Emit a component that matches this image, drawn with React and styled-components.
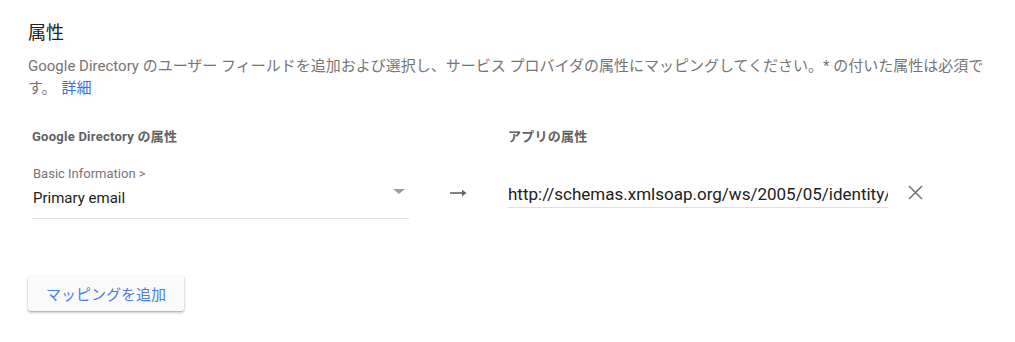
import React from "react";
import styled, { createGlobalStyle } from "styled-components";

const GlobalStyle = createGlobalStyle`
  body {
    margin: 0;
    background: #fff;
    font-family: Roboto, "Noto Sans CJK JP", sans-serif;
  }
`;

const Page = styled.div`
  width: 1015px;
  height: 342px;
  padding: 21px 28px 0;
  box-sizing: border-box;
`;

const Title = styled.h2`
  margin: 0;
  font-size: 18px;
  line-height: 24px;
  font-weight: 400;
  color: #212121;
`;

const Description = styled.p`
  margin: 10px 0 0;
  width: 962px;
  font-size: 15px;
  line-height: 22px;
  color: #757575;
`;

const Link = styled.a`
  display: inline-block;
  margin-left: 5px;
  color: #3b6fd9;
  text-decoration: none;
`;

const Grid = styled.div`
  display: grid;
  grid-template-columns: 377px 99px 380px 20px 15px;
  margin: 28px 0 0 4px;
  align-items: center;
`;

const ColumnHead = styled.div`
  font-size: 13px;
  letter-spacing: 0.25px;
  line-height: 20px;
  font-weight: 700;
  color: #616161;
  grid-column: ${(p) => p.col};
`;

const Select = styled.div`
  position: relative;
  grid-column: 1;
  margin-top: 19px;
  padding: 0 0 10px 1px;
  border-bottom: 1px solid #e0e0e0;
`;

const SelectLabel = styled.div`
  font-size: 13px;
  line-height: 16px;
  color: #757575;
  margin-bottom: 6px;
`;

const SelectValue = styled.div`
  font-size: 15px;
  line-height: 20px;
  color: #212121;
`;

const Caret = styled.span`
  position: absolute;
  right: 4px;
  top: 23px;
  width: 0;
  height: 0;
  border-left: 6px solid transparent;
  border-right: 6px solid transparent;
  border-top: 5px solid #9e9e9e;
`;

const ArrowCell = styled.div`
  grid-column: 2;
  margin-top: 19px;
  display: flex;
  justify-content: center;
  align-items: center;
  color: #5f6368;
`;

const InputWrap = styled.div`
  grid-column: 3;
  margin-top: 26px;
  overflow: hidden;
  border-bottom: 1px solid #e0e0e0;
  padding-bottom: 3px;
`;

const UrlText = styled.div`
  font-size: 17px;
  line-height: 20px;
  color: #212121;
  white-space: nowrap;
`;

const CloseCell = styled.div`
  grid-column: 5;
  margin-top: 19px;
  display: flex;
  align-items: center;
  color: #757575;
`;

const AddButton = styled.button`
  margin-top: 56px;
  width: 156px;
  height: 36px;
  border: none;
  border-radius: 3px;
  background: #fafafa;
  box-shadow: 0 1px 2px rgba(0, 0, 0, 0.25), 0 2px 3px rgba(0, 0, 0, 0.12);
  color: #4a7de8;
  font-family: Roboto, "Noto Sans CJK JP", sans-serif;
  font-size: 15px;
  padding: 0;
  cursor: pointer;
`;

const App = () => (
  <Page>
    <GlobalStyle />
    <Title>属性</Title>
    <Description>
      Google Directory のユーザー フィールドを追加および選択し、サービス プロバイダの属性にマッピングしてください。* の付いた属性は必須です。
      <Link href="#">詳細</Link>
    </Description>
    <Grid>
      <ColumnHead col={1}>Google Directory の属性</ColumnHead>
      <ColumnHead col={3}>アプリの属性</ColumnHead>
      <Select>
        <SelectLabel>Basic Information &gt;</SelectLabel>
        <SelectValue>Primary email</SelectValue>
        <Caret />
      </Select>
      <ArrowCell>
        <svg width="17" height="8" viewBox="0 0 17 8">
          <path d="M0 4h13" stroke="currentColor" strokeWidth="1.6" />
          <path d="M12 0.8L16.5 4L12 7.2z" fill="currentColor" />
        </svg>
      </ArrowCell>
      <InputWrap>
        <UrlText>http://schemas.xmlsoap.org/ws/2005/05/identity/claims/emailaddress</UrlText>
      </InputWrap>
      <CloseCell>
        <svg width="15" height="15" viewBox="0 0 15 15">
          <path d="M1 1L14 14M14 1L1 14" stroke="currentColor" strokeWidth="1.6" />
        </svg>
      </CloseCell>
    </Grid>
    <AddButton>マッピングを追加</AddButton>
  </Page>
);

export default App;
